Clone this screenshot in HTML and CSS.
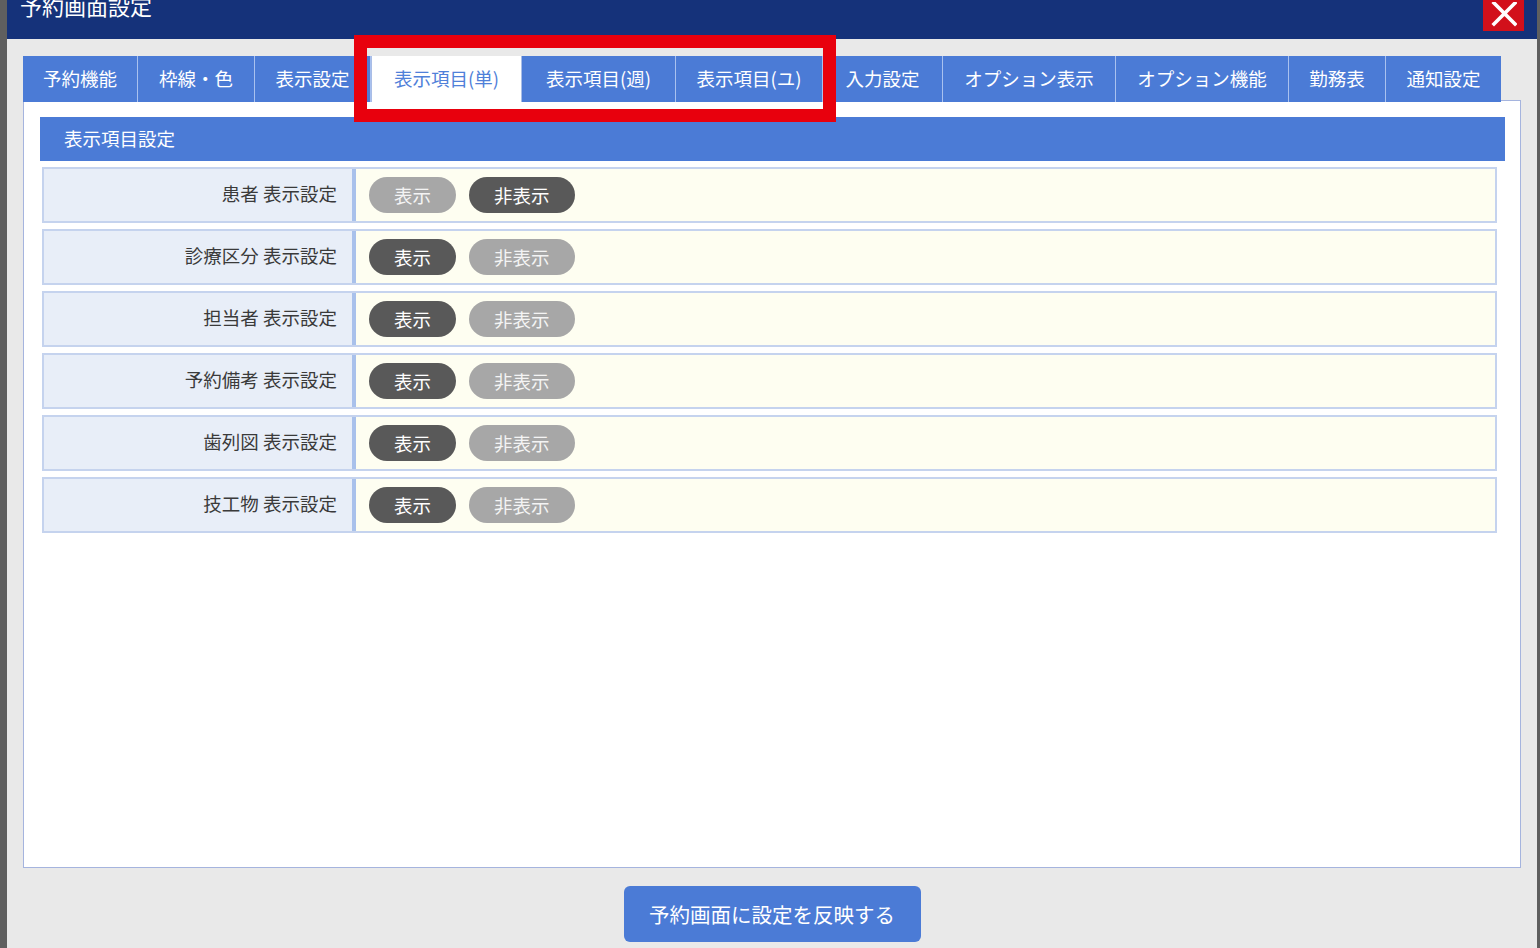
FILE: index.html
```html
<!DOCTYPE html>
<html lang="ja">
<head>
<meta charset="utf-8">
<title>予約画面設定</title>
<link rel="stylesheet" href="styles.css">
</head>
<body>
<div class="dialog">
  <div class="titlebar">
    <div class="title">予約画面設定</div>
    <button class="close" aria-label="閉じる">
      <svg width="26" height="26" viewBox="0 0 26 26"><path d="M3 1 L24 22 M24 1 L3 22" stroke="#fff" stroke-width="3.6" stroke-linecap="square" fill="none"/></svg>
    </button>
  </div>
  <div class="body">
    <div class="tabs">
      <div class="tab">予約機能</div>
      <div class="tab">枠線・色</div>
      <div class="tab">表示設定</div>
      <div class="tab active">表示項目(単)</div>
      <div class="tab">表示項目(週)</div>
      <div class="tab">表示項目(ユ)</div>
      <div class="tab">入力設定</div>
      <div class="tab">オプション表示</div>
      <div class="tab">オプション機能</div>
      <div class="tab">勤務表</div>
      <div class="tab">通知設定</div>
    </div>
    <div class="panel">
      <div class="section-head">表示項目設定</div>
      <div class="rows">
        <div class="row">
          <div class="label">患者 表示設定</div>
          <div class="value"><span class="pill off">表示</span><span class="pill on">非表示</span></div>
        </div>
        <div class="row">
          <div class="label">診療区分 表示設定</div>
          <div class="value"><span class="pill on">表示</span><span class="pill off">非表示</span></div>
        </div>
        <div class="row">
          <div class="label">担当者 表示設定</div>
          <div class="value"><span class="pill on">表示</span><span class="pill off">非表示</span></div>
        </div>
        <div class="row">
          <div class="label">予約備考 表示設定</div>
          <div class="value"><span class="pill on">表示</span><span class="pill off">非表示</span></div>
        </div>
        <div class="row">
          <div class="label">歯列図 表示設定</div>
          <div class="value"><span class="pill on">表示</span><span class="pill off">非表示</span></div>
        </div>
        <div class="row">
          <div class="label">技工物 表示設定</div>
          <div class="value"><span class="pill on">表示</span><span class="pill off">非表示</span></div>
        </div>
      </div>
    </div>
    <div class="footer">
      <button class="apply">予約画面に設定を反映する</button>
    </div>
  </div>
  <div class="highlight"></div>
</div>
</body>
</html>
```
FILE: styles.css
```css
html, body {
  margin: 0;
  padding: 0;
  height: 100%;
}
body {
  background: #5f5f5f;
  font-family: "Noto Sans CJK JP", "Noto Sans", sans-serif;
  padding: 0 3px 0 7px;
  box-sizing: border-box;
  overflow: hidden;
}
.dialog {
  position: relative;
  height: 948px;
  display: flex;
  flex-direction: column;
  background: #e9e9e9;
}
.titlebar {
  height: 39px;
  flex: none;
  background: #15327a;
  display: flex;
  justify-content: space-between;
  align-items: flex-start;
  padding: 0 13px 0 13px;
  box-sizing: border-box;
}
.title {
  color: #fff;
  font-size: 22px;
  line-height: 22px;
  margin-top: -6px;
  letter-spacing: 0;
}
.close {
  width: 41px;
  height: 31px;
  border: 0;
  padding: 0;
  margin: 0;
  background: #d2101b;
  display: flex;
  align-items: center;
  justify-content: center;
}
.close svg {
  margin-top: -2px;
}
.body {
  flex: 1;
  display: flex;
  flex-direction: column;
  padding: 17px 16px 6px 16px;
  min-height: 0;
}
.tabs {
  display: grid;
  grid-template-columns: 115px 117px 116px 151px 154px 147px 120px 173px 173px 97px 115px;
  height: 45px;
  flex: none;
  margin-bottom: -1px;
  position: relative;
  z-index: 1;
}
.tab {
  background: #4b7bd6;
  color: #fff;
  font-size: 18.5px;
  display: flex;
  align-items: center;
  justify-content: center;
  border-right: 1px solid #a9c1ef;
  white-space: nowrap;
  padding-bottom: 2px;
  box-sizing: border-box;
}
.tab:last-child {
  border-right: 0;
}
.tab.active {
  background: #fff;
  color: #4f80d9;
  border-left: 1px solid #a9bde6;
  border-right: 1px solid #a9bde6;
  height: 46px;
}
.panel {
  flex: 1;
  background: #fff;
  border: 1px solid #a5b4de;
  padding: 16px 15px 0 16px;
  min-height: 0;
}
.section-head {
  height: 44px;
  background: #4b7bd6;
  color: #fff;
  font-size: 18.5px;
  display: flex;
  align-items: center;
  padding-left: 24px;
  padding-bottom: 2px;
  box-sizing: border-box;
}
.rows {
  margin: 6px 8px 0 2px;
  display: flex;
  flex-direction: column;
  gap: 6px;
}
.row {
  height: 56px;
  box-sizing: border-box;
  border: 2px solid #c5d3ee;
  display: grid;
  grid-template-columns: 312px 1fr;
}
.label {
  background: #e8eef8;
  border-right: 4px solid #a9c1eb;
  color: #3a3a3a;
  font-size: 18.5px;
  display: flex;
  align-items: center;
  justify-content: flex-end;
  padding-right: 15px;
  padding-bottom: 4px;
}
.value {
  background: #fefef1;
  display: flex;
  align-items: center;
  gap: 13px;
  padding-left: 13px;
}
.pill {
  height: 36px;
  border-radius: 18px;
  padding: 0 25px 1px;
  font-size: 18.5px;
  color: #fff;
  display: inline-flex;
  align-items: center;
  box-sizing: border-box;
}
.pill.on {
  background: #595959;
}
.pill.off {
  background: #a7a7a7;
  color: #f4f4f4;
}
.footer {
  flex: none;
  display: flex;
  justify-content: center;
  padding-top: 18px;
}
.apply {
  width: 297px;
  height: 56px;
  border: 0;
  border-radius: 6px;
  background: #4b7bd6;
  color: #fff;
  font-family: "Noto Sans CJK JP", "Noto Sans", sans-serif;
  font-size: 20.5px;
  padding: 0;
}
.highlight {
  position: absolute;
  left: 347px;
  top: 35px;
  width: 482px;
  height: 87px;
  border: 13px solid #e8000d;
  box-sizing: border-box;
  z-index: 5;
  pointer-events: none;
}
```
